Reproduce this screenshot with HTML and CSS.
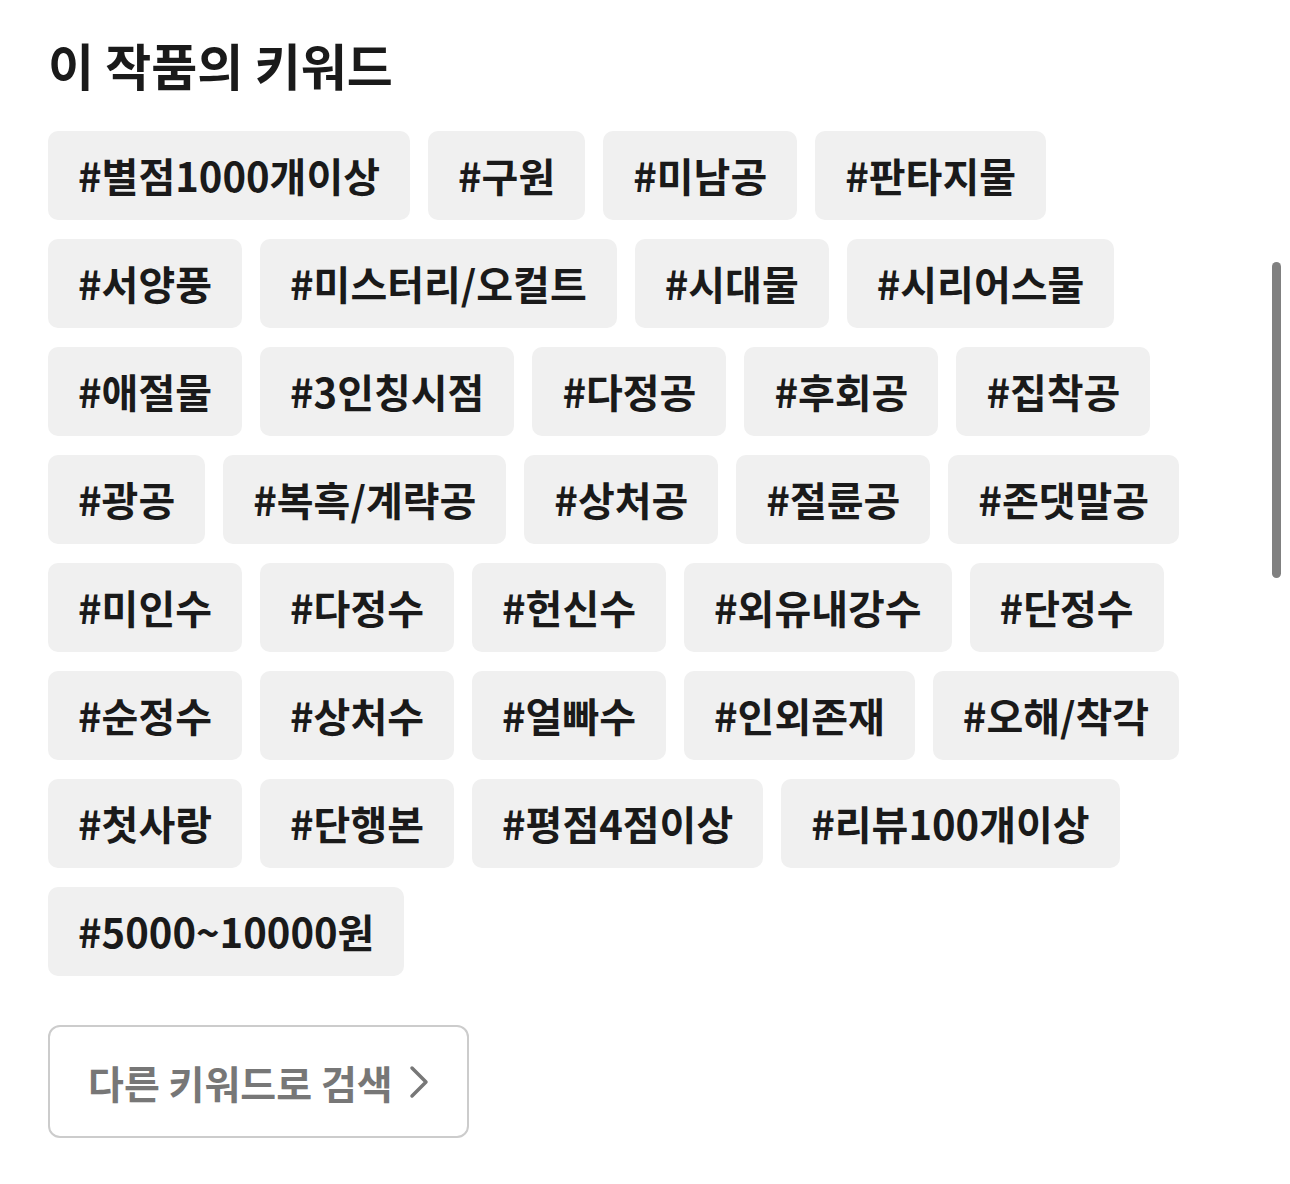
FILE: index.html
```html
<!DOCTYPE html>
<html>
    <head>
        <meta charset="utf-8">
        <title>이 작품의 키워드</title>
        <link rel="stylesheet" href="styles.css">
    </head>
    <body>
        <div class="container">
            <h2 class="title">이 작품의 키워드</h2>
            <div class="tags">
                <span class="tag">#별점1000개이상</span>
                <span class="tag">#구원</span>
                <span class="tag">#미남공</span>
                <span class="tag">#판타지물</span>
                <span class="tag">#서양풍</span>
                <span class="tag">#미스터리/오컬트</span>
                <span class="tag">#시대물</span>
                <span class="tag">#시리어스물</span>
                <span class="tag">#애절물</span>
                <span class="tag">#3인칭시점</span>
                <span class="tag">#다정공</span>
                <span class="tag">#후회공</span>
                <span class="tag">#집착공</span>
                <span class="tag">#광공</span>
                <span class="tag">#복흑/계략공</span>
                <span class="tag">#상처공</span>
                <span class="tag">#절륜공</span>
                <span class="tag">#존댓말공</span>
                <span class="tag">#미인수</span>
                <span class="tag">#다정수</span>
                <span class="tag">#헌신수</span>
                <span class="tag">#외유내강수</span>
                <span class="tag">#단정수</span>
                <span class="tag">#순정수</span>
                <span class="tag">#상처수</span>
                <span class="tag">#얼빠수</span>
                <span class="tag">#인외존재</span>
                <span class="tag">#오해/착각</span>
                <span class="tag">#첫사랑</span>
                <span class="tag">#단행본</span>
                <span class="tag">#평점4점이상</span>
                <span class="tag">#리뷰100개이상</span>
                <span class="tag">#5000~10000원</span>
            </div>
            <div class="btn-wrap">
                <span class="btn-search">다른 키워드로 검색
                    <svg class="chevron" width="20" height="34" viewBox="0 0 20 34">
                        <path d="M3 3 L17 17 L3 31" fill="none" stroke="#777" stroke-width="3.5" stroke-linecap="round" stroke-linejoin="round"/>
                    </svg>
                </span>
            </div>
        </div>
        <div class="scrollbar"></div>
    </body>
</html>
```

FILE: styles.css
```css
*{
    margin: 0;
    padding: 0;
    box-sizing: border-box;
}
body{
    font-family: "Noto Sans CJK KR", "Noto Sans", sans-serif;
    background-color: #fff;
    color: #1a1a1a;
    overflow: hidden;
}
.container{
    width: 1290px;
    padding: 32px 48px 0;
}
.title{
    font-size: 50px;
    font-weight: 700;
    line-height: 64px;
    color: #1a1a1a;
}
.tags{
    display: flex;
    flex-wrap: wrap;
    gap: 19px 18px;
    margin-top: 35px;
}
.tag{
    display: inline-block;
    height: 89px;
    line-height: 89px;
    padding: 0 30px;
    background-color: #f0f0f0;
    border-radius: 10px;
    font-size: 40px;
    font-weight: 700;
    color: #1a1a1a;
}
.btn-wrap{
    margin-top: 49px;
}
.btn-search{
    display: inline-flex;
    align-items: center;
    gap: 16px;
    height: 113px;
    padding: 0 38px;
    border: 2px solid #cccccc;
    border-radius: 12px;
    font-size: 39px;
    font-weight: 700;
    color: #777;
}
.scrollbar{
    position: fixed;
    top: 262px;
    left: 1272px;
    width: 9px;
    height: 316px;
    border-radius: 5px;
    background-color: #808080;
}
```
